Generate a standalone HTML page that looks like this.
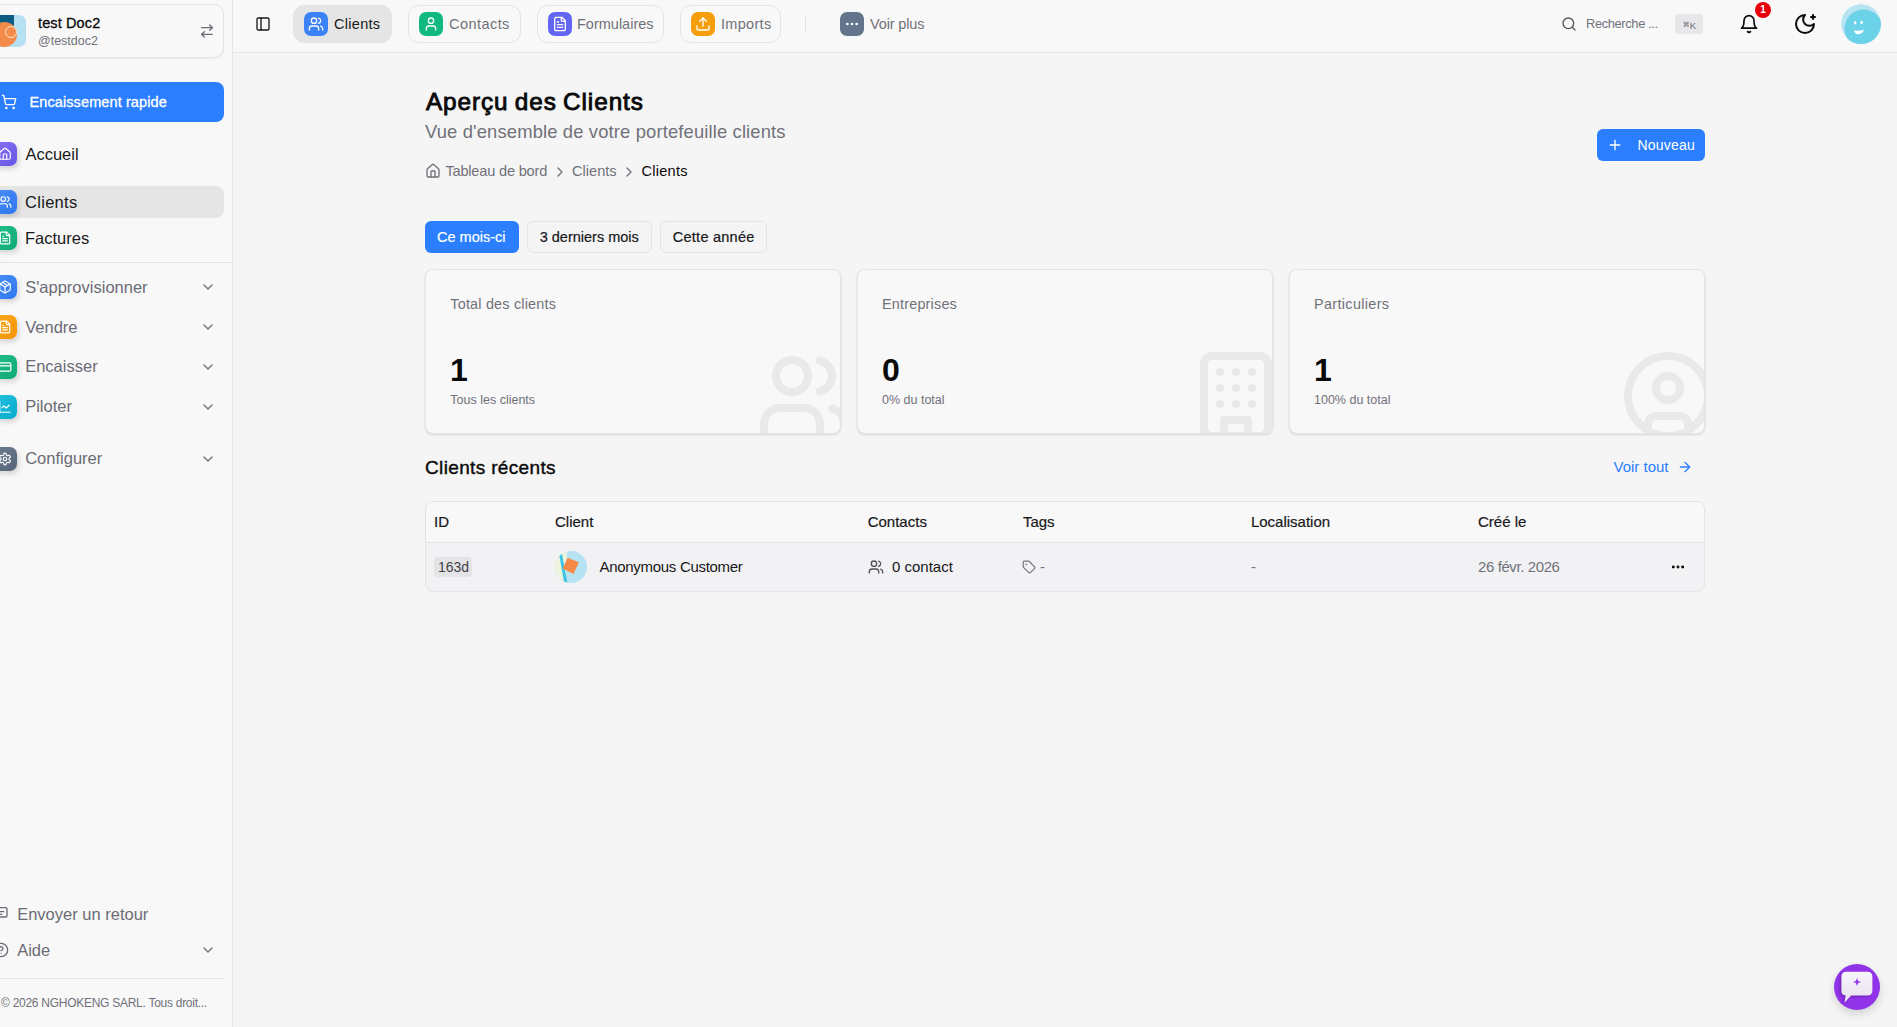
<!DOCTYPE html>
<html lang="fr">
<head>
<meta charset="utf-8">
<title>Clients</title>
<style>
*{box-sizing:border-box;margin:0;padding:0}
html,body{width:1897px;height:1027px;overflow:hidden;background:#f5f5f5;font-family:"Liberation Sans",sans-serif}
.t{position:absolute;white-space:nowrap;line-height:1;font-family:"Liberation Sans",sans-serif}
.abs{position:absolute}
svg{display:block}
#sidebar{position:absolute;left:0;top:0;width:233px;height:1027px;background:#f8f8f8;border-right:1px solid #e4e4e7}
#header{position:absolute;left:233px;top:0;width:1664px;height:53px;background:#f8f8f8;border-bottom:1px solid #e4e4e7}
.pill{position:absolute;top:5px;height:38px;border-radius:11px;border:1px solid #e4e4e7}
.nicon{position:absolute;top:12px;width:24px;height:24px;border-radius:7px}
.nicon svg{position:absolute;left:4px;top:4px}
.sicon{position:absolute;left:-7px;width:24px;height:24px;border-radius:7px;box-shadow:2px 3px 5px rgba(0,0,0,.14)}
.sicon svg{position:absolute;left:5px;top:5px}
.chev{position:absolute;left:200px}
.card{position:absolute;top:269px;width:416px;height:164.5px;background:#f8f8f8;border:1px solid #e4e4e7;border-radius:8px;overflow:hidden;box-shadow:0 1px 3px rgba(0,0,0,.08),0 1px 2px rgba(0,0,0,.05)}
.ghost{position:absolute;right:-12px;bottom:-11px}
.btn{position:absolute;top:221px;height:32px;border-radius:6px}
</style>
</head>
<body>

<!-- SIDEBAR -->
<div id="sidebar">
  <!-- user card -->
  <div class="abs" style="left:-20px;top:4px;width:244px;height:54px;border:1px solid #e4e4e7;border-radius:10px;background:#f8f8f8;box-shadow:0 1px 2px rgba(0,0,0,.05)"></div>
  <div class="abs" style="left:-6px;top:15px;width:32px;height:32px;border-radius:7px;background:#b6e1f2;overflow:hidden">
    <div class="abs" style="left:0;top:0;width:20px;height:12px;background:#0d5c84;border-radius:0 0 3px 0"></div>
    <div class="abs" style="left:-2.5px;top:7px;width:25px;height:25px;border-radius:50%;background:#f48b4a"></div>
    <div class="abs" style="left:10.5px;top:10.8px;width:12.4px;height:12.4px;border-radius:50%;border:1px solid #f6e8cc"></div>
  </div>
  <div class="t" style="left:38px;top:16.2px;font-size:14.5px;font-weight:400;-webkit-text-stroke:0.3px #0a0a0a;letter-spacing:0.12px;color:#0a0a0a">test Doc2</div>
  <div class="t" style="left:38px;top:35px;font-size:12.5px;color:#71717a">@testdoc2</div>
  <svg class="abs" style="left:199px;top:23px" width="16" height="16" viewBox="0 0 24 24" fill="none" stroke="#6b6b76" stroke-width="2" stroke-linecap="round" stroke-linejoin="round"><path d="m16 3 4 4-4 4"/><path d="M20 7H4"/><path d="m8 21-4-4 4-4"/><path d="M4 17h16"/></svg>

  <!-- quick cash -->
  <div class="abs" style="left:-20px;top:82px;width:244px;height:40px;border-radius:8px;background:#2b7fff"></div>
  <svg class="abs" style="left:1px;top:94px" width="16" height="16" viewBox="0 0 24 24" fill="none" stroke="#fff" stroke-width="2" stroke-linecap="round" stroke-linejoin="round"><circle cx="8" cy="21" r="1"/><circle cx="19" cy="21" r="1"/><path d="M2.05 2.05h2l2.66 12.42a2 2 0 0 0 2 1.58h9.78a2 2 0 0 0 1.95-1.57l1.65-7.43H5.12"/></svg>
  <div class="t" style="left:29.5px;top:94.7px;font-size:14.5px;font-weight:400;-webkit-text-stroke:0.3px #fff;letter-spacing:0.1px;color:#fff">Encaissement rapide</div>

  <!-- nav items -->
  <div class="sicon" style="top:142px;background:linear-gradient(135deg,#8b6ff3,#6457e6)"><svg width="14" height="14" viewBox="0 0 24 24" fill="none" stroke="#fff" stroke-width="2" stroke-linecap="round" stroke-linejoin="round"><path d="M15 21v-8a1 1 0 0 0-1-1h-4a1 1 0 0 0-1 1v8"/><path d="M3 10a2 2 0 0 1 .709-1.528l7-5.999a2 2 0 0 1 2.582 0l7 5.999A2 2 0 0 1 21 10v9a2 2 0 0 1-2 2H5a2 2 0 0 1-2-2z"/></svg></div>
  <div class="t" style="left:25.4px;top:145.8px;font-size:16.5px;color:#18181b">Accueil</div>

  <div class="abs" style="left:-20px;top:186px;width:244px;height:32px;border-radius:8px;background:#e5e5e5"></div>
  <div class="sicon" style="top:190px;background:linear-gradient(135deg,#4a8ff7,#2f76f0)"><svg width="14" height="14" viewBox="0 0 24 24" fill="none" stroke="#fff" stroke-width="2" stroke-linecap="round" stroke-linejoin="round"><path d="M16 21v-2a4 4 0 0 0-4-4H6a4 4 0 0 0-4 4v2"/><circle cx="9" cy="7" r="4"/><path d="M22 21v-2a4 4 0 0 0-3-3.87"/><path d="M16 3.13a4 4 0 0 1 0 7.75"/></svg></div>
  <div class="t" style="left:25px;top:193.6px;font-size:16.5px;letter-spacing:0.3px;color:#18181b">Clients</div>

  <div class="sicon" style="top:226px;background:linear-gradient(135deg,#1fc08a,#10a874)"><svg width="14" height="14" viewBox="0 0 24 24" fill="none" stroke="#fff" stroke-width="2" stroke-linecap="round" stroke-linejoin="round"><path d="M15 2H6a2 2 0 0 0-2 2v16a2 2 0 0 0 2 2h12a2 2 0 0 0 2-2V7Z"/><path d="M14 2v4a2 2 0 0 0 2 2h4"/><path d="M10 9H8"/><path d="M16 13H8"/><path d="M16 17H8"/></svg></div>
  <div class="t" style="left:25px;top:230.4px;font-size:16.5px;color:#18181b">Factures</div>

  <div class="abs" style="left:0;top:262px;width:232px;height:1px;background:#e4e4e7"></div>

  <div class="sicon" style="top:275px;background:linear-gradient(135deg,#4a8ff7,#2f76f0)"><svg width="14" height="14" viewBox="0 0 24 24" fill="none" stroke="#fff" stroke-width="2" stroke-linecap="round" stroke-linejoin="round"><path d="M11 21.73a2 2 0 0 0 2 0l7-4A2 2 0 0 0 21 16V8a2 2 0 0 0-1-1.73l-7-4a2 2 0 0 0-2 0l-7 4A2 2 0 0 0 3 8v8a2 2 0 0 0 1 1.73z"/><path d="M12 22V12"/><path d="m3.3 7 8.7 5 8.7-5"/><path d="m7.5 4.27 9 5.15"/></svg></div>
  <div class="t" style="left:25.2px;top:278.9px;font-size:16.5px;color:#6b6b76">S'approvisionner</div>
  <svg class="chev" style="top:279px" width="16" height="16" viewBox="0 0 24 24" fill="none" stroke="#71717a" stroke-width="2" stroke-linecap="round" stroke-linejoin="round"><path d="m6 9 6 6 6-6"/></svg>

  <div class="sicon" style="top:315px;background:linear-gradient(135deg,#fbab1e,#f59305)"><svg width="14" height="14" viewBox="0 0 24 24" fill="none" stroke="#fff" stroke-width="2" stroke-linecap="round" stroke-linejoin="round"><path d="M15 2H6a2 2 0 0 0-2 2v16a2 2 0 0 0 2 2h12a2 2 0 0 0 2-2V7Z"/><path d="M14 2v4a2 2 0 0 0 2 2h4"/><path d="M10 9H8"/><path d="M16 13H8"/><path d="M16 17H8"/></svg></div>
  <div class="t" style="left:25.2px;top:318.6px;font-size:16.5px;color:#6b6b76">Vendre</div>
  <svg class="chev" style="top:319px" width="16" height="16" viewBox="0 0 24 24" fill="none" stroke="#71717a" stroke-width="2" stroke-linecap="round" stroke-linejoin="round"><path d="m6 9 6 6 6-6"/></svg>

  <div class="sicon" style="top:355px;background:linear-gradient(135deg,#1fc08a,#10a874)"><svg width="14" height="14" viewBox="0 0 24 24" fill="none" stroke="#fff" stroke-width="2" stroke-linecap="round" stroke-linejoin="round"><rect width="20" height="14" x="2" y="5" rx="2"/><path d="M2 10h20"/></svg></div>
  <div class="t" style="left:25.2px;top:358.4px;font-size:16.5px;color:#6b6b76">Encaisser</div>
  <svg class="chev" style="top:359px" width="16" height="16" viewBox="0 0 24 24" fill="none" stroke="#71717a" stroke-width="2" stroke-linecap="round" stroke-linejoin="round"><path d="m6 9 6 6 6-6"/></svg>

  <div class="sicon" style="top:395px;background:linear-gradient(135deg,#22c3e0,#0aa9cc)"><svg width="14" height="14" viewBox="0 0 24 24" fill="none" stroke="#fff" stroke-width="2" stroke-linecap="round" stroke-linejoin="round"><path d="M3 3v16a2 2 0 0 0 2 2h16"/><path d="m19 9-5 5-4-4-3 3"/></svg></div>
  <div class="t" style="left:25.2px;top:398.4px;font-size:16.5px;color:#6b6b76">Piloter</div>
  <svg class="chev" style="top:399px" width="16" height="16" viewBox="0 0 24 24" fill="none" stroke="#71717a" stroke-width="2" stroke-linecap="round" stroke-linejoin="round"><path d="m6 9 6 6 6-6"/></svg>

  <div class="sicon" style="top:447px;background:linear-gradient(135deg,#6f7d92,#56647a)"><svg width="14" height="14" viewBox="0 0 24 24" fill="none" stroke="#fff" stroke-width="2" stroke-linecap="round" stroke-linejoin="round"><path d="M12.22 2h-.44a2 2 0 0 0-2 2v.18a2 2 0 0 1-1 1.73l-.43.25a2 2 0 0 1-2 0l-.15-.08a2 2 0 0 0-2.73.73l-.22.38a2 2 0 0 0 .73 2.73l.15.1a2 2 0 0 1 1 1.72v.51a2 2 0 0 1-1 1.74l-.15.09a2 2 0 0 0-.73 2.73l.22.38a2 2 0 0 0 2.73.73l.15-.08a2 2 0 0 1 2 0l.43.25a2 2 0 0 1 1 1.73V20a2 2 0 0 0 2 2h.44a2 2 0 0 0 2-2v-.18a2 2 0 0 1 1-1.73l.43-.25a2 2 0 0 1 2 0l.15.08a2 2 0 0 0 2.73-.73l.22-.39a2 2 0 0 0-.73-2.73l-.15-.08a2 2 0 0 1-1-1.74v-.5a2 2 0 0 1 1-1.74l.15-.09a2 2 0 0 0 .73-2.73l-.22-.38a2 2 0 0 0-2.73-.73l-.15.08a2 2 0 0 1-2 0l-.43-.25a2 2 0 0 1-1-1.73V4a2 2 0 0 0-2-2z"/><circle cx="12" cy="12" r="3"/></svg></div>
  <div class="t" style="left:25.2px;top:450.2px;font-size:16.5px;color:#6b6b76">Configurer</div>
  <svg class="chev" style="top:451px" width="16" height="16" viewBox="0 0 24 24" fill="none" stroke="#71717a" stroke-width="2" stroke-linecap="round" stroke-linejoin="round"><path d="m6 9 6 6 6-6"/></svg>

  <!-- bottom -->
  <svg class="abs" style="left:-6.7px;top:905px" width="16" height="16" viewBox="0 0 24 24" fill="none" stroke="#6b6b76" stroke-width="2" stroke-linecap="round" stroke-linejoin="round"><rect x="3" y="4" width="18" height="14" rx="2"/><path d="M8 10h8M8 14h5"/></svg>
  <div class="t" style="left:17.2px;top:906px;font-size:16.5px;color:#6b6b76">Envoyer un retour</div>
  <svg class="abs" style="left:-6.7px;top:942px" width="16" height="16" viewBox="0 0 24 24" fill="none" stroke="#6b6b76" stroke-width="2" stroke-linecap="round" stroke-linejoin="round"><circle cx="12" cy="12" r="10"/><path d="M9.09 9a3 3 0 0 1 5.83 1c0 2-3 3-3 3"/><path d="M12 17h.01"/></svg>
  <div class="t" style="left:17.2px;top:941.8px;font-size:16.5px;color:#6b6b76">Aide</div>
  <svg class="chev" style="top:942px" width="16" height="16" viewBox="0 0 24 24" fill="none" stroke="#71717a" stroke-width="2" stroke-linecap="round" stroke-linejoin="round"><path d="m6 9 6 6 6-6"/></svg>
  <div class="abs" style="left:0;top:978px;width:224px;height:1px;background:#e4e4e7"></div>
  <div class="t" style="left:1px;top:997.3px;font-size:12px;letter-spacing:-0.27px;color:#71717a">© 2026 NGHOKENG SARL. Tous droit...</div>
</div>

<!-- HEADER -->
<div id="header"></div>
<svg class="abs" style="left:255px;top:16px" width="16" height="16" viewBox="0 0 24 24" fill="none" stroke="#18181b" stroke-width="2" stroke-linecap="round" stroke-linejoin="round"><rect width="18" height="18" x="3" y="3" rx="2"/><path d="M9 3v18"/></svg>

<div class="pill" style="left:293px;width:99px;background:#e5e5e5;border-color:#e5e5e5"></div>
<div class="nicon" style="left:304px;background:#3b82f6"><svg width="16" height="16" viewBox="0 0 24 24" fill="none" stroke="#fff" stroke-width="2" stroke-linecap="round" stroke-linejoin="round"><path d="M16 21v-2a4 4 0 0 0-4-4H6a4 4 0 0 0-4 4v2"/><circle cx="9" cy="7" r="4"/><path d="M22 21v-2a4 4 0 0 0-3-3.87"/><path d="M16 3.13a4 4 0 0 1 0 7.75"/></svg></div>
<div class="t" style="left:334px;top:16.7px;font-size:14.5px;letter-spacing:0.3px;color:#18181b">Clients</div>

<div class="pill" style="left:408px;width:113px"></div>
<div class="nicon" style="left:419px;background:#10b981"><svg width="16" height="16" viewBox="0 0 24 24" fill="none" stroke="#fff" stroke-width="2" stroke-linecap="round" stroke-linejoin="round"><path d="M19 21v-2a4 4 0 0 0-4-4H9a4 4 0 0 0-4 4v2"/><circle cx="12" cy="7" r="4"/></svg></div>
<div class="t" style="left:449px;top:16.7px;font-size:14.5px;letter-spacing:0.45px;color:#71717a">Contacts</div>

<div class="pill" style="left:537px;width:127px"></div>
<div class="nicon" style="left:548px;background:#6366f1"><svg width="16" height="16" viewBox="0 0 24 24" fill="none" stroke="#fff" stroke-width="2" stroke-linecap="round" stroke-linejoin="round"><path d="M15 2H6a2 2 0 0 0-2 2v16a2 2 0 0 0 2 2h12a2 2 0 0 0 2-2V7Z"/><path d="M14 2v4a2 2 0 0 0 2 2h4"/><path d="M10 9H8"/><path d="M16 13H8"/><path d="M16 17H8"/></svg></div>
<div class="t" style="left:577px;top:16.7px;font-size:14.5px;color:#71717a">Formulaires</div>

<div class="pill" style="left:680px;width:101px"></div>
<div class="nicon" style="left:691px;background:#f59e0b"><svg width="16" height="16" viewBox="0 0 24 24" fill="none" stroke="#fff" stroke-width="2" stroke-linecap="round" stroke-linejoin="round"><path d="M21 15v4a2 2 0 0 1-2 2H5a2 2 0 0 1-2-2v-4"/><path d="m17 8-5-5-5 5"/><path d="M12 3v12"/></svg></div>
<div class="t" style="left:721px;top:16.7px;font-size:14.5px;letter-spacing:0.3px;color:#71717a">Imports</div>

<div class="abs" style="left:805px;top:16px;width:1px;height:16px;background:#e4e4e7"></div>
<div class="nicon" style="left:840px;background:#64748b"><svg width="16" height="16" viewBox="0 0 24 24" fill="#fff"><circle cx="5" cy="12" r="2"/><circle cx="12" cy="12" r="2"/><circle cx="19" cy="12" r="2"/></svg></div>
<div class="t" style="left:870px;top:16.7px;font-size:14.5px;letter-spacing:-0.15px;color:#71717a">Voir plus</div>

<!-- search -->
<svg class="abs" style="left:1561px;top:16px" width="16" height="16" viewBox="0 0 24 24" fill="none" stroke="#52525b" stroke-width="2" stroke-linecap="round" stroke-linejoin="round"><circle cx="11" cy="11" r="8"/><path d="m21 21-4.3-4.3"/></svg>
<div class="t" style="left:1586px;top:18px;font-size:12.8px;letter-spacing:-0.33px;color:#71717a">Recherche ...</div>
<div class="abs" style="left:1675px;top:14px;width:28px;height:20px;border-radius:4px;background:#e7e7ea"></div>
<svg class="abs" style="left:1682.5px;top:21px" width="6.5" height="6.5" viewBox="0 0 24 24" fill="none" stroke="#71717a" stroke-width="2.4" stroke-linecap="round" stroke-linejoin="round"><path d="M15 6v12a3 3 0 1 0 3-3H6a3 3 0 1 0 3 3V6a3 3 0 1 0-3 3h12a3 3 0 1 0-3-3"/></svg><div class="t" style="left:1689.8px;top:20.6px;font-size:9.6px;color:#71717a">K</div>

<svg class="abs" style="left:1739px;top:14px" width="20" height="20" viewBox="0 0 24 24" fill="none" stroke="#0a0a0a" stroke-width="2" stroke-linecap="round" stroke-linejoin="round"><path d="M6 8a6 6 0 0 1 12 0c0 7 3 9 3 9H3s3-2 3-9"/><path d="M10.3 21a1.94 1.94 0 0 0 3.4 0"/></svg>
<div class="abs" style="left:1755px;top:2px;width:16px;height:16px;border-radius:50%;background:#e7000b"></div>
<div class="t" style="left:1760.3px;top:5.2px;font-size:10px;font-weight:700;color:#fff">1</div>

<svg class="abs" style="left:1793px;top:12px" width="24" height="24" viewBox="0 0 24 24" fill="none" stroke="#0a0a0a" stroke-width="2" stroke-linecap="round" stroke-linejoin="round"><path d="M12 3a6 6 0 0 0 9 9 9 9 0 1 1-9-9Z"/><path d="M20 3v4"/><path d="M22 5h-4"/></svg>

<svg class="abs" style="left:1841px;top:4px" width="40" height="40" viewBox="0 0 40 40"><defs><clipPath id="av"><circle cx="20" cy="20" r="20"/></clipPath></defs><g clip-path="url(#av)"><circle cx="20" cy="20" r="20" fill="#b8e3f3"/><circle cx="22.5" cy="24.5" r="19" fill="#6cd2e8"/><ellipse cx="14.2" cy="18.8" rx="1.2" ry="1.7" fill="#fff"/><ellipse cx="20.6" cy="18.4" rx="1.2" ry="1.7" fill="#fff"/><path d="M12.9 26.2Q18 27.8 23.1 25.6Q21.5 30.3 17 30.2Q14 30 12.9 26.2Z" fill="#fff"/></g></svg>

<!-- MAIN -->
<div class="t" style="left:425.9px;top:89.6px;font-size:24.3px;letter-spacing:0.95px;word-spacing:-1.5px;font-weight:400;-webkit-text-stroke:0.9px #0a0a0a;color:#0a0a0a">Aperçu des Clients</div>
<div class="t" style="left:425px;top:123.3px;font-size:18.4px;letter-spacing:0.14px;color:#71717a">Vue d'ensemble de votre portefeuille clients</div>

<svg class="abs" style="left:424.7px;top:163px" width="16" height="16" viewBox="0 0 24 24" fill="none" stroke="#71717a" stroke-width="2" stroke-linecap="round" stroke-linejoin="round"><path d="M15 21v-8a1 1 0 0 0-1-1h-4a1 1 0 0 0-1 1v8"/><path d="M3 10a2 2 0 0 1 .709-1.528l7-5.999a2 2 0 0 1 2.582 0l7 5.999A2 2 0 0 1 21 10v9a2 2 0 0 1-2 2H5a2 2 0 0 1-2-2z"/></svg>
<div class="t" style="left:445.4px;top:163.8px;font-size:14.6px;letter-spacing:-0.2px;color:#71717a">Tableau de bord</div>
<svg class="abs" style="left:552px;top:164px" width="16" height="16" viewBox="0 0 24 24" fill="none" stroke="#71717a" stroke-width="2" stroke-linecap="round" stroke-linejoin="round"><path d="m9 18 6-6-6-6"/></svg>
<div class="t" style="left:572px;top:163.8px;font-size:14.6px;color:#71717a">Clients</div>
<svg class="abs" style="left:621px;top:164px" width="16" height="16" viewBox="0 0 24 24" fill="none" stroke="#71717a" stroke-width="2" stroke-linecap="round" stroke-linejoin="round"><path d="m9 18 6-6-6-6"/></svg>
<div class="t" style="left:641.4px;top:163.8px;font-size:14.6px;letter-spacing:0.25px;color:#0a0a0a">Clients</div>

<div class="abs" style="left:1597px;top:129px;width:108px;height:32px;border-radius:6px;background:#2b7fff"></div>
<svg class="abs" style="left:1607px;top:137px" width="16" height="16" viewBox="0 0 24 24" fill="none" stroke="#fff" stroke-width="2" stroke-linecap="round" stroke-linejoin="round"><path d="M5 12h14"/><path d="M12 5v14"/></svg>
<div class="t" style="left:1637.5px;top:137.8px;font-size:14px;letter-spacing:0.2px;color:#fff">Nouveau</div>

<!-- filter buttons -->
<div class="btn" style="left:425px;width:94px;background:#2b7fff"></div>
<div class="t" style="left:437px;top:229.8px;font-size:14.5px;-webkit-text-stroke:0.2px #fff;color:#fff">Ce mois-ci</div>
<div class="btn" style="left:527px;width:125px;background:#f4f4f4;border:1px solid #e4e4e7"></div>
<div class="t" style="left:539.7px;top:229.8px;font-size:14.5px;-webkit-text-stroke:0.2px #18181b;color:#18181b">3 derniers mois</div>
<div class="btn" style="left:660px;width:107px;background:#f4f4f4;border:1px solid #e4e4e7"></div>
<div class="t" style="left:672.8px;top:229.8px;font-size:14.5px;letter-spacing:0.25px;-webkit-text-stroke:0.2px #18181b;color:#18181b">Cette année</div>

<!-- cards -->
<div class="card" style="left:425px">
  <svg class="ghost" width="96" height="96" viewBox="0 0 24 24" fill="none" stroke="#e9e9e9" stroke-width="2" stroke-linecap="round" stroke-linejoin="round"><path d="M16 21v-2a4 4 0 0 0-4-4H6a4 4 0 0 0-4 4v2"/><circle cx="9" cy="7" r="4"/><path d="M22 21v-2a4 4 0 0 0-3-3.87"/><path d="M16 3.13a4 4 0 0 1 0 7.75"/></svg>
</div>
<div class="t" style="left:450.3px;top:296.5px;font-size:14.4px;letter-spacing:0.2px;color:#71717a">Total des clients</div>
<div class="t" style="left:450px;top:353.9px;font-size:32px;font-weight:700;color:#0a0a0a">1</div>
<div class="t" style="left:450.3px;top:394px;font-size:12.5px;color:#71717a">Tous les clients</div>

<div class="card" style="left:857px">
  <svg class="ghost" width="96" height="96" viewBox="0 0 24 24" fill="none" stroke="#e9e9e9" stroke-width="2" stroke-linecap="round" stroke-linejoin="round"><rect width="16" height="20" x="4" y="2" rx="2" ry="2"/><path d="M9 22v-4h6v4"/><path d="M8 6h.01"/><path d="M16 6h.01"/><path d="M12 6h.01"/><path d="M12 10h.01"/><path d="M12 14h.01"/><path d="M16 10h.01"/><path d="M16 14h.01"/><path d="M8 10h.01"/><path d="M8 14h.01"/></svg>
</div>
<div class="t" style="left:882px;top:296.5px;font-size:14.4px;letter-spacing:0.2px;color:#71717a">Entreprises</div>
<div class="t" style="left:882px;top:353.9px;font-size:32px;font-weight:700;color:#0a0a0a">0</div>
<div class="t" style="left:882px;top:394px;font-size:12.5px;color:#71717a">0% du total</div>

<div class="card" style="left:1289px">
  <svg class="ghost" width="96" height="96" viewBox="0 0 24 24" fill="none" stroke="#e9e9e9" stroke-width="2" stroke-linecap="round" stroke-linejoin="round"><circle cx="12" cy="12" r="10"/><circle cx="12" cy="10" r="3"/><path d="M7 20.662V19a2 2 0 0 1 2-2h6a2 2 0 0 1 2 2v1.662"/></svg>
</div>
<div class="t" style="left:1314px;top:296.5px;font-size:14.4px;letter-spacing:0.35px;color:#71717a">Particuliers</div>
<div class="t" style="left:1314px;top:353.9px;font-size:32px;font-weight:700;color:#0a0a0a">1</div>
<div class="t" style="left:1314px;top:394px;font-size:12.5px;color:#71717a">100% du total</div>

<!-- recent clients -->
<div class="t" style="left:425px;top:458px;font-size:19px;font-weight:400;-webkit-text-stroke:0.4px #0a0a0a;letter-spacing:0.35px;color:#0a0a0a">Clients récents</div>
<div class="t" style="left:1613.5px;top:458.6px;font-size:15px;color:#2b7fff">Voir tout</div>
<svg class="abs" style="left:1677px;top:459px" width="16" height="16" viewBox="0 0 24 24" fill="none" stroke="#2b7fff" stroke-width="2" stroke-linecap="round" stroke-linejoin="round"><path d="M5 12h14"/><path d="m12 5 7 7-7 7"/></svg>

<div class="abs" style="left:425px;top:501px;width:1280px;height:91px;border:1px solid #e4e4e7;border-radius:8px;background:#f2f2f4;overflow:hidden">
  <div class="abs" style="left:0;top:0;width:1280px;height:41px;background:#f8f8f8;border-bottom:1px solid #e4e4e7"></div>
</div>
<div class="t" style="left:434px;top:513.5px;font-size:15px;-webkit-text-stroke:0.2px #18181b;color:#18181b">ID</div>
<div class="t" style="left:555px;top:513.5px;font-size:15px;-webkit-text-stroke:0.2px #18181b;color:#18181b">Client</div>
<div class="t" style="left:867.7px;top:513.5px;font-size:15px;-webkit-text-stroke:0.2px #18181b;color:#18181b">Contacts</div>
<div class="t" style="left:1022.9px;top:513.5px;font-size:15px;-webkit-text-stroke:0.2px #18181b;color:#18181b">Tags</div>
<div class="t" style="left:1250.9px;top:513.5px;font-size:15px;-webkit-text-stroke:0.2px #18181b;color:#18181b">Localisation</div>
<div class="t" style="left:1478px;top:513.5px;font-size:15px;-webkit-text-stroke:0.2px #18181b;color:#18181b">Créé le</div>

<div class="abs" style="left:434px;top:557px;width:38px;height:20px;border-radius:4px;background:#e4e4e7"></div>
<div class="t" style="left:438px;top:560px;font-size:14px;color:#3f3f46">163d</div>
<svg class="abs" style="left:555px;top:551px" width="32" height="32" viewBox="0 0 32 32"><defs><clipPath id="ca"><circle cx="16" cy="16" r="16"/></clipPath></defs><g clip-path="url(#ca)"><rect width="32" height="32" fill="#b6e3f4"/><path d="M0 0H12.2L9.8 32H0Z" fill="#eef3dc"/><path d="M3.6 0.5L6.6 0.5L12.4 32L9.2 32Z" fill="#3ec6e2"/><path d="M12.6 6.7L23.9 11.2L18.5 23L7.6 17.6Z" fill="#f58a48"/></g></svg>
<div class="t" style="left:599.5px;top:559.2px;font-size:15px;letter-spacing:-0.3px;color:#18181b">Anonymous Customer</div>
<svg class="abs" style="left:868px;top:559px" width="16" height="16" viewBox="0 0 24 24" fill="none" stroke="#52525b" stroke-width="2" stroke-linecap="round" stroke-linejoin="round"><path d="M16 21v-2a4 4 0 0 0-4-4H6a4 4 0 0 0-4 4v2"/><circle cx="9" cy="7" r="4"/><path d="M22 21v-2a4 4 0 0 0-3-3.87"/><path d="M16 3.13a4 4 0 0 1 0 7.75"/></svg>
<div class="t" style="left:892px;top:559.2px;font-size:15px;color:#18181b">0 contact</div>
<svg class="abs" style="left:1022px;top:560px" width="14" height="14" viewBox="0 0 24 24" fill="none" stroke="#71717a" stroke-width="2" stroke-linecap="round" stroke-linejoin="round"><path d="M12.586 2.586A2 2 0 0 0 11.172 2H4a2 2 0 0 0-2 2v7.172a2 2 0 0 0 .586 1.414l8.704 8.704a2.426 2.426 0 0 0 3.42 0l6.58-6.58a2.426 2.426 0 0 0 0-3.42z"/><circle cx="7.5" cy="7.5" r=".5" fill="#71717a"/></svg>
<div class="t" style="left:1040px;top:559.2px;font-size:15px;color:#71717a">-</div>
<div class="t" style="left:1251px;top:559.2px;font-size:15px;color:#71717a">-</div>
<div class="t" style="left:1478px;top:559.2px;font-size:15px;letter-spacing:-0.4px;color:#71717a">26 févr. 2026</div>
<svg class="abs" style="left:1670px;top:559px" width="16" height="16" viewBox="0 0 24 24" fill="#0a0a0a" stroke="#0a0a0a" stroke-width="1.6"><circle cx="5" cy="12" r="1.4"/><circle cx="12" cy="12" r="1.4"/><circle cx="19" cy="12" r="1.4"/></svg>

<!-- chat fab -->
<div class="abs" style="left:1834px;top:964px;width:46px;height:46px;border-radius:50%;background:#9133e8;box-shadow:0 4px 10px rgba(0,0,0,.15)"></div>
<svg class="abs" style="left:1838px;top:968px" width="38" height="38" viewBox="0 0 38 38"><defs><filter id="fb" x="-30%" y="-30%" width="160%" height="160%"><feGaussianBlur stdDeviation="1.2"/></filter><linearGradient id="bg1" x1="0" y1="0" x2="0" y2="1"><stop offset="0" stop-color="#f7f5fb"/><stop offset="1" stop-color="#e6e0f0"/></linearGradient></defs><path d="M2 10a4.5 4.5 0 0 1 4.5-4.5h22a4.5 4.5 0 0 1 4.5 4.5v14a4.5 4.5 0 0 1-4.5 4.5H12l-7 7 1.5-7.4a4.5 4.5 0 0 1-4.5-4.1z" fill="#4a1d80" opacity=".55" filter="url(#fb)"/><path d="M3.4 8.3a4.5 4.5 0 0 1 4.5-4.5h22a4.5 4.5 0 0 1 4.5 4.5v14.7a4.5 4.5 0 0 1-4.5 4.5H13.2l-6.8 7.2 1.3-7.3a4.5 4.5 0 0 1-4.3-4.4z" fill="url(#bg1)"/><path d="M19 10l1.1 2.9 2.9 1.1-2.9 1.1-1.1 2.9-1.1-2.9-2.9-1.1 2.9-1.1z" fill="#9133e8"/></svg>

</body>
</html>
